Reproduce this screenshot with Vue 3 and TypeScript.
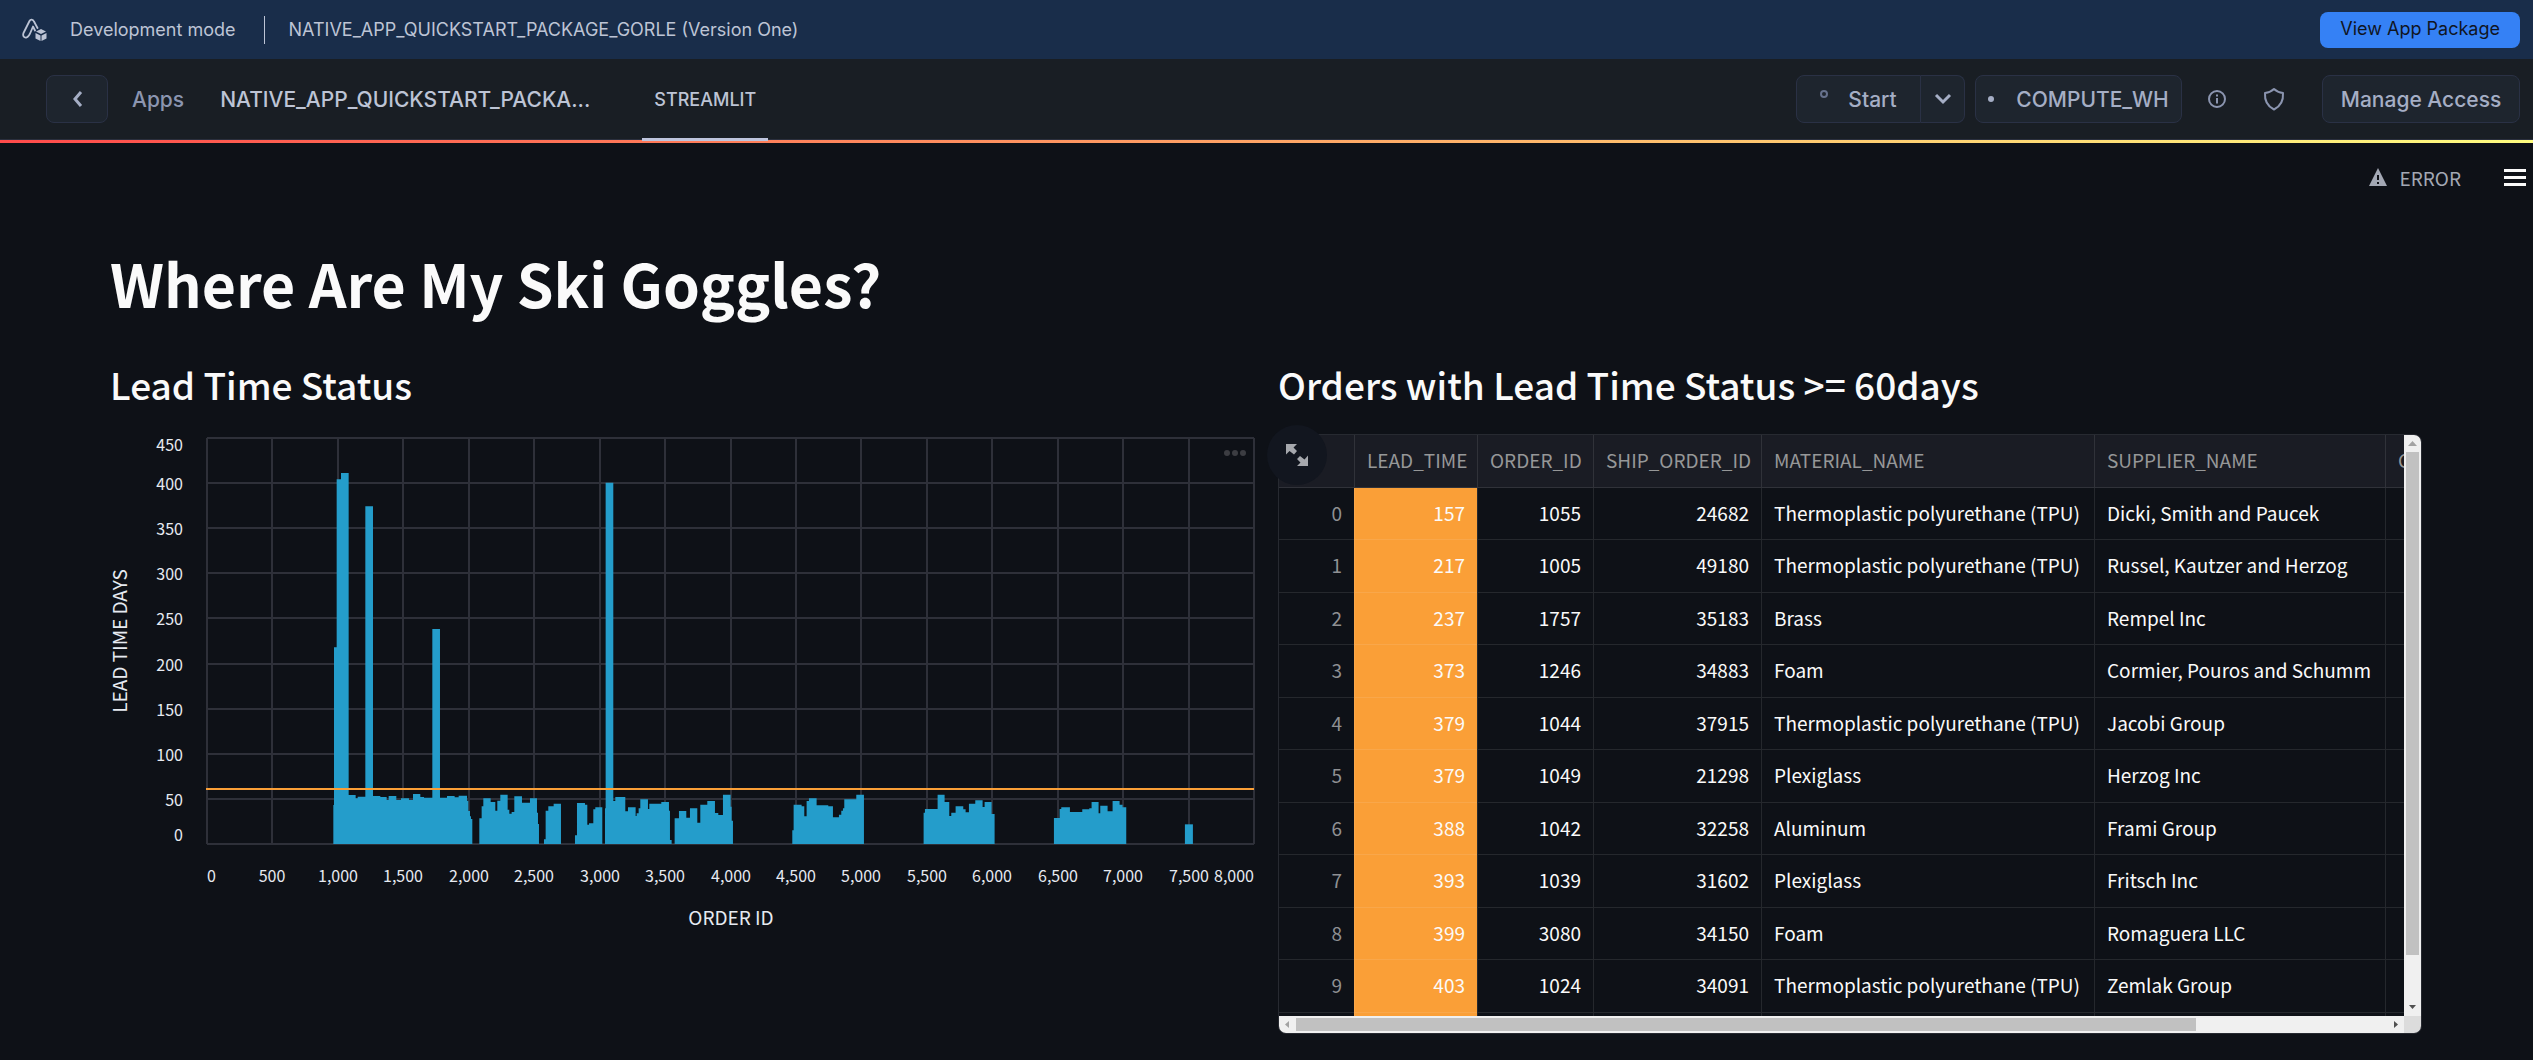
<script setup lang="ts">
interface Order {
  lead: number
  order: number
  ship: number
  material: string
  supplier: string
}

const orders: Order[] = [
  { lead: 157, order: 1055, ship: 24682, material: 'Thermoplastic polyurethane (TPU)', supplier: 'Dicki, Smith and Paucek' },
  { lead: 217, order: 1005, ship: 49180, material: 'Thermoplastic polyurethane (TPU)', supplier: 'Russel, Kautzer and Herzog' },
  { lead: 237, order: 1757, ship: 35183, material: 'Brass', supplier: 'Rempel Inc' },
  { lead: 373, order: 1246, ship: 34883, material: 'Foam', supplier: 'Cormier, Pouros and Schumm' },
  { lead: 379, order: 1044, ship: 37915, material: 'Thermoplastic polyurethane (TPU)', supplier: 'Jacobi Group' },
  { lead: 379, order: 1049, ship: 21298, material: 'Plexiglass', supplier: 'Herzog Inc' },
  { lead: 388, order: 1042, ship: 32258, material: 'Aluminum', supplier: 'Frami Group' },
  { lead: 393, order: 1039, ship: 31602, material: 'Plexiglass', supplier: 'Fritsch Inc' },
  { lead: 399, order: 3080, ship: 34150, material: 'Foam', supplier: 'Romaguera LLC' },
  { lead: 403, order: 1024, ship: 34091, material: 'Thermoplastic polyurethane (TPU)', supplier: 'Zemlak Group' },
]

const plot = { left: 97, right: 1144, top: 4, bottom: 410 }

const xTicks = Array.from({ length: 17 }, (_, i) => {
  const at = Math.round(plot.left + ((plot.right - plot.left) * i) / 16)
  const anchor = i === 0 ? 'start' : i === 16 ? 'end' : 'middle'
  return { at, anchor, label: (i * 500).toLocaleString('en-US') }
})

const yTicks = Array.from({ length: 10 }, (_, i) => {
  const at = Math.round(plot.bottom - ((plot.bottom - plot.top) * i) / 9)
  const text = i === 0 ? at - 3 : i === 9 ? at + 13 : at + 7
  return { at, text, label: String(i * 50) }
})

// Skyline of each cluster of bars, in thirds of a pixel: x, top, x, top, ... last x
const floor = 225
const clusters: number[][] = [
  [40, 108, 42, -365, 50, -869, 63, -888, 86, 78, 107, 88, 113, 83, 136, -788, 159, 81, 181, 84, 200, 93, 206, 81, 229, 93, 243, 88, 267, 93, 279, 75, 301, 84, 312, 86, 337, -420, 360, 86, 381, 81, 404, 85, 416, 80, 441, 95, 445, 126, 450, 142, 453, 150, 457],
  [478, 148, 485, 112, 490, 88, 512, 99, 526, 125, 532, 95, 541, 77, 563, 122, 568, 134, 575, 129, 583, 82, 606, 101, 630, 88, 651, 131, 654, 165, 657],
  [672, 211, 677, 125, 685, 112, 701, 104, 723],
  [765, 199, 771, 102, 795, 107, 802, 167, 807, 163, 820, 121, 826, 115, 847],
  [855, 118, 857, -859, 880, 96, 886, 84, 916, 127, 924, 115, 947, 141, 950, 133, 956, 118, 961, 91, 984, 120, 988, 104, 1024, 99, 1047, 125, 1050, 213, 1055],
  [1064, 148, 1077, 126, 1099, 146, 1110, 118, 1132, 161, 1141, 107, 1162, 96, 1185, 132, 1195, 138, 1209, 77, 1232, 113, 1235, 155, 1239],
  [1417, 184, 1421, 107, 1445, 112, 1453, 142, 1460, 96, 1467, 88, 1490, 109, 1525, 112, 1539, 145, 1557, 137, 1564, 125, 1569, 118, 1573, 91, 1609, 77, 1632],
  [1811, 131, 1815, 120, 1853, 77, 1874, 99, 1888, 141, 1894, 131, 1907, 112, 1930, 121, 1937, 130, 1947, 104, 1966, 94, 1988, 114, 1994, 99, 2015, 135, 2024],
  [2202, 147, 2219, 120, 2224, 115, 2250, 129, 2287, 121, 2308, 118, 2315, 99, 2336, 133, 2341, 110, 2363, 127, 2378, 96, 2399, 107, 2408, 115, 2419],
  [2595, 166, 2619],
]

const barPaths = clusters.map((c) => {
  let d = `M${c[0]} ${floor}`
  for (let i = 1; i < c.length; i += 2) d += `V${c[i]}H${c[i + 1]}`
  return `${d}V${floor}Z`
})
</script>

<template>
  <div class="page">
    <div class="devbar">
      <svg class="devlogo" viewBox="0 0 26 24" aria-hidden="true">
        <path d="M15.500 10L12 3.500C11 1 8.500 1 7.500 3L1.500 15C.5 18 2 20 4.500 19.500C6.500 19 7.500 17 8.500 14.500L11 8.500L13 12.500" fill="none" stroke="currentColor" stroke-width="1.800" stroke-linecap="round" stroke-linejoin="round" />
        <path d="M19 11L24 13.500L19 16L14 13.500ZM13.500 15L18.500 17.500V23L13.500 20.500ZM24.500 15L19.500 17.500V23L24.500 20.500Z" fill="currentColor" />
      </svg>
      <span class="devmode">Development mode</span>
      <span class="devpkg">NATIVE_APP_QUICKSTART_PACKAGE_GORLE (Version One)</span>
      <button class="primary" type="button">View App Package</button>
    </div>

    <header class="appbar">
      <button class="btn back" type="button" aria-label="Back">
        <svg width="12" height="16" viewBox="0 0 12 16"><path d="M10 1L4 8L10 15" fill="none" stroke="currentColor" stroke-width="3" /></svg>
      </button>
      <a class="crumb" href="#">Apps</a>
      <span class="title">NATIVE_APP_QUICKSTART_PACKA...</span>
      <a class="tab" href="#">STREAMLIT</a>
      <div class="actions">
        <div class="split">
          <button class="btn start" type="button">
            <svg width="8" height="22" viewBox="0 0 8 22"><circle cx="4" cy="6" r="3" fill="none" stroke="#66718c" stroke-width="2" /></svg>
            Start
          </button>
          <button class="btn more" type="button" aria-label="More start options">
            <svg width="18" height="12" viewBox="0 0 18 12"><path d="M2 2L9 9L16 2" fill="none" stroke="currentColor" stroke-width="3" /></svg>
          </button>
        </div>
        <button class="btn warehouse" type="button"><span class="dot"></span>COMPUTE_WH</button>
        <button class="icon" type="button" aria-label="Information">
          <svg width="20" height="20" viewBox="0 0 20 20"><circle cx="10" cy="10" r="8" fill="none" stroke="currentColor" stroke-width="2" /><path d="M10 9V14.500M10 5.500V7.500" stroke="currentColor" stroke-width="2" /></svg>
        </button>
        <button class="icon shield" type="button" aria-label="Security">
          <svg width="22" height="24" viewBox="0 0 22 24"><path d="M11 2C13 4 16 5.500 20 6C20.500 13 18 19 11 22.500C4 19 1.500 13 2 6C6 5.500 9 4 11 2Z" fill="none" stroke="currentColor" stroke-width="2" stroke-linejoin="round" /></svg>
        </button>
        <button class="btn manage" type="button">Manage Access</button>
      </div>
    </header>

    <main class="app">
      <div class="toolbar">
        <svg width="18" height="18" viewBox="0 0 18 18" aria-hidden="true"><path fill-rule="evenodd" d="M9 0L18 18H0ZM8 7V12H10V7ZM8 14V16H10V14Z" fill="#a3a8b4" /></svg>
        <span class="status">ERROR</span>
        <button class="burger" type="button" aria-label="Menu"><i></i><i></i><i></i></button>
      </div>

      <h1>Where Are My Ski Goggles?</h1>

      <div class="columns">
        <section>
          <h2>Lead Time Status</h2>
          <svg class="chart" viewBox="0 0 1144 500" role="img" aria-label="Lead time days by order ID">
            <g class="grid">
              <line v-for="t in xTicks" :key="'x' + t.label" :x1="t.at" :x2="t.at" :y1="plot.top" :y2="plot.bottom" />
              <line v-for="t in yTicks" :key="'y' + t.label" :x1="plot.left" :x2="plot.right" :y1="t.at" :y2="t.at" />
            </g>
            <g class="bars" transform="translate(210 335) scale(0.3333)">
              <path v-for="(d, i) in barPaths" :key="i" :d="d" />
            </g>
            <line class="limit" :x1="plot.left - 1" :x2="plot.right" y1="355" y2="355" />
            <g class="ticks">
              <text v-for="t in yTicks" :key="t.label" x="73" :y="t.text" text-anchor="end">{{ t.label }}</text>
              <text v-for="t in xTicks" :key="t.label" :x="t.at" y="448" :text-anchor="t.anchor">{{ t.label }}</text>
            </g>
            <text class="axis" x="621" y="491" text-anchor="middle">ORDER ID</text>
            <text class="axis" transform="translate(17 207) rotate(-90)" text-anchor="middle">LEAD TIME DAYS</text>
            <g class="menu"><circle cx="1117" cy="19" r="3" /><circle cx="1125" cy="19" r="3" /><circle cx="1133" cy="19" r="3" /></g>
          </svg>
        </section>

        <section>
          <h2>Orders with Lead Time Status &gt;= 60days</h2>
          <div class="frame-wrap">
            <div class="frame">
              <div class="view">
                <table>
                  <colgroup>
                    <col class="c-idx" /><col class="c-lead" /><col class="c-order" /><col class="c-ship" /><col class="c-mat" /><col class="c-sup" /><col class="c-next" />
                  </colgroup>
                  <thead>
                    <tr>
                      <th></th>
                      <th class="num">LEAD_TIME</th>
                      <th class="num">ORDER_ID</th>
                      <th class="num">SHIP_ORDER_ID</th>
                      <th>MATERIAL_NAME</th>
                      <th>SUPPLIER_NAME</th>
                      <th>C</th>
                    </tr>
                  </thead>
                  <tbody>
                    <tr v-for="(o, i) in orders" :key="o.ship">
                      <td class="num idx">{{ i }}</td>
                      <td class="num lead">{{ o.lead }}</td>
                      <td class="num">{{ o.order }}</td>
                      <td class="num">{{ o.ship }}</td>
                      <td>{{ o.material }}</td>
                      <td>{{ o.supplier }}</td>
                      <td></td>
                    </tr>
                    <tr class="peek"><td></td><td class="lead"></td><td></td><td></td><td></td><td></td><td></td></tr>
                  </tbody>
                </table>
              </div>
              <div class="vbar">
                <svg width="17" height="17" viewBox="0 0 17 17"><path d="M4 11L8.500 6L13 11Z" fill="#a3a3a3" /></svg>
                <div class="rail"><div class="thumb"></div></div>
                <svg width="17" height="17" viewBox="0 0 17 17"><path d="M5 6L8.500 10L12 6Z" fill="#505050" /></svg>
              </div>
              <div class="hbar">
                <svg width="17" height="17" viewBox="0 0 17 17"><path d="M10 5L6 8.500L10 12Z" fill="#a3a3a3" /></svg>
                <div class="rail"><div class="thumb"></div></div>
                <svg width="17" height="17" viewBox="0 0 17 17"><path d="M7 5L11 8.500L7 12Z" fill="#505050" /></svg>
              </div>
              <div class="corner"></div>
            </div>
            <button class="expand" type="button" aria-label="View fullscreen">
              <svg width="22" height="22" viewBox="0 0 22 22"><path d="M0 0H11L7.500 3.500L11 7L8 10.500L3.500 7L0 10.500ZM22 22H11L14.500 18.500L11 15L14 12L18.500 15.500L22 11.500Z" fill="#a6a8ad" /></svg>
            </button>
          </div>
        </section>
      </div>
    </main>
  </div>
</template>

<style>
body {
  background: #0e1117;
}
</style>

<style scoped>
.page {
  font-family: Inter, "Liberation Sans", sans-serif;
  color: #bdc4d5;
  background: #0e1117;
  min-height: 100vh;
}
button {
  font: inherit;
  color: inherit;
  padding: 0;
  cursor: pointer;
}
a {
  color: inherit;
  text-decoration: none;
}
.devbar {
  display: flex;
  align-items: center;
  height: 59px;
  padding: 0 13px 0 22px;
  background: #192d4a;
  font-size: 18px;
}
.devlogo {
  width: 26px;
  height: 24px;
}
.devmode {
  margin-left: 22px;
  padding-right: 28px;
  border-right: 1px solid #bdc4d5;
  line-height: 28px;
}
.devpkg {
  margin-left: 24px;
}
.primary {
  margin-left: auto;
  height: 36px;
  padding: 0 20px 2px;
  border: 0;
  border-radius: 8px;
  background: #3581f5;
  color: #10151f;
}
.appbar {
  display: flex;
  align-items: center;
  height: 80px;
  padding: 0 13px 0 46px;
  background: #191e24;
  border-bottom: 1px solid #2a2f3d;
  font-size: 21px;
  font-weight: 500;
}
.btn {
  display: flex;
  align-items: center;
  justify-content: center;
  box-sizing: border-box;
  height: 48px;
  border: 1px solid #2a3145;
  border-radius: 8px;
  background: #1e252e;
  color: #a5aec5;
}
.back {
  width: 62px;
  color: #a5aec5;
}
.crumb {
  margin-left: 24px;
  color: #8b95b0;
}
.title {
  margin-left: 36px;
}
.tab {
  position: relative;
  align-self: stretch;
  display: flex;
  align-items: center;
  margin-left: 52px;
  padding: 0 12px;
  font-size: 18px;
}
.tab::after {
  content: "";
  position: absolute;
  left: 0;
  right: 0;
  bottom: -2px;
  height: 3px;
  background: #bdc4dd;
}
.actions {
  display: flex;
  align-items: center;
  margin-left: auto;
}
.split {
  display: flex;
}
.start {
  width: 125px;
  gap: 20px;
  border-radius: 8px 0 0 8px;
}
.more {
  width: 44px;
  border-left: 0;
  border-radius: 0 8px 8px 0;
}
.warehouse {
  width: 207px;
  margin-left: 10px;
  gap: 22px;
}
.dot {
  width: 6px;
  height: 6px;
  border-radius: 50%;
  background: #a5aec5;
}
.icon {
  display: flex;
  margin-left: 25px;
  border: 0;
  background: none;
  color: #8b95b0;
}
.shield {
  margin-left: 36px;
}
.manage {
  width: 198px;
  margin-left: 37px;
}
.app {
  border-top: 3px solid;
  border-image: linear-gradient(90deg, #ff4b4b, #fffd80) 1;
  color: #fafafa;
  font-family: "Noto Sans CJK JP", "Noto Sans", sans-serif;
  padding-bottom: 24px;
}
.toolbar {
  display: flex;
  align-items: center;
  justify-content: flex-end;
  height: 68px;
  padding-right: 7px;
  color: #a3a8b4;
  font-size: 19px;
}
.status {
  margin: 0 43px 0 13px;
}
.burger {
  display: flex;
  flex-direction: column;
  gap: 4px;
  width: 22px;
  border: 0;
  background: none;
}
.burger i {
  height: 3px;
  background: #fafafa;
}
h1 {
  margin: 30px 110px 36px;
  font-size: 59px;
  font-weight: 700;
  line-height: 84px;
}
h2 {
  margin: 0 0 27px;
  font-size: 37px;
  font-weight: 500;
  line-height: 46px;
  white-space: nowrap;
}
.columns {
  display: grid;
  grid-template-columns: minmax(0, 1fr) minmax(0, 1fr);
  gap: 24px;
  padding: 0 111px 0 110px;
}
.chart {
  display: block;
  width: 100%;
  overflow: visible;
}
.grid line {
  stroke: #2e3039;
  stroke-width: 2;
}
.bars path {
  fill: #249dcb;
}
.limit {
  stroke: #fa9f37;
  stroke-width: 2;
}
.ticks text {
  fill: #e6eaf1;
  font-size: 16px;
}
.axis {
  fill: #e6eaf1;
  font-size: 19px;
}
.menu circle {
  fill: #3c3d42;
}
.frame-wrap {
  position: relative;
}
.frame {
  display: grid;
  grid-template-columns: minmax(0, 1fr) 17px;
  grid-template-rows: auto 17px;
  border: 1px solid #272a31;
  border-radius: 8px;
  overflow: hidden;
}
.view {
  overflow: hidden;
}
table {
  width: 1227px;
  table-layout: fixed;
  border-collapse: separate;
  border-spacing: 0;
  font-size: 19px;
}
.c-idx { width: 75px; }
.c-lead { width: 123px; }
.c-order { width: 116px; }
.c-ship { width: 168px; }
.c-mat { width: 333px; }
.c-sup { width: 291px; }
.c-next { width: 121px; }
th,
td {
  box-sizing: border-box;
  height: 52px;
  padding: 0 12px 2px;
  border-left: 1px solid rgba(250, 250, 250, 0.1);
  border-bottom: 1px solid rgba(250, 250, 250, 0.1);
  text-align: left;
  line-height: 28px;
  white-space: nowrap;
}
th:first-child,
td:first-child {
  border-left: 0;
}
tbody tr:nth-child(even) td {
  height: 53px;
}
th {
  height: 53px;
  background: #1a1c24;
  color: #969798;
  font-weight: 400;
}
.num {
  text-align: right;
}
.idx {
  color: #8f9093;
}
.lead {
  background: #fa9f37;
}
tbody tr.peek td {
  height: 3px;
  padding: 0;
  line-height: 2px;
  border-bottom: 0;
}
.vbar,
.hbar {
  display: flex;
  background: #f0f0f0;
}
.vbar {
  flex-direction: column;
}
.rail {
  display: flex;
  flex: 1;
}
.vbar .rail {
  flex-direction: column;
  align-items: center;
}
.hbar .rail {
  align-items: center;
}
.thumb {
  background: #c1c1c1;
}
.vbar .thumb {
  width: 13px;
  height: 92%;
}
.hbar .thumb {
  width: 82.500%;
  height: 13px;
}
.corner {
  background: #dcdcdc;
}
.expand {
  position: absolute;
  top: -9px;
  left: -11px;
  display: flex;
  align-items: center;
  justify-content: center;
  width: 60px;
  height: 60px;
  border: 0;
  border-radius: 50%;
  background: #12161f;
}
</style>
